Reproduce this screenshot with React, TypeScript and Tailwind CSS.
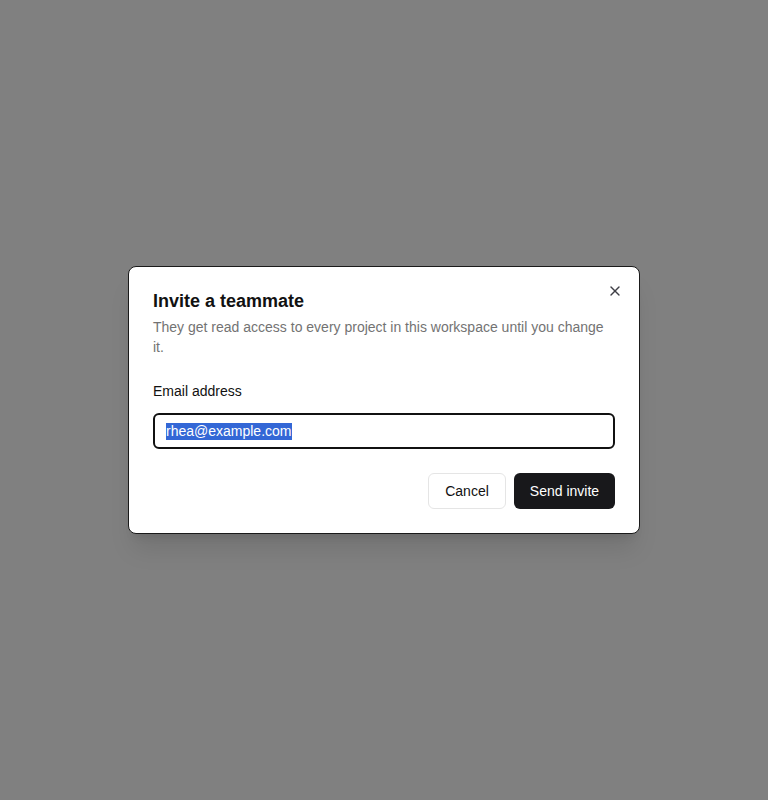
import { X } from 'lucide-react'

export default function App() {
  return (
    <div
      className="flex min-h-[800px] w-full items-center justify-center bg-[#808080]"
      style={{ fontFamily: '"Liberation Sans", Arial, sans-serif' }}
    >
      <div className="relative mb-[1px] w-[512px] rounded-lg border border-[#1a1a1a] bg-white p-6 shadow-xl">
        <button className="absolute right-4 top-4 text-[#3f3f46]">
          <X className="h-4 w-4" strokeWidth={2} />
        </button>

        <h2 className="text-[18px] font-bold leading-5 text-[#111111]">Invite a teammate</h2>
        <p className="mt-[6px] text-sm leading-5 text-[#737373]">
          They get read access to every project in this workspace until you change it.
        </p>

        <label className="mt-6 block text-sm leading-5 text-[#111111]">Email address</label>
        <div className="mt-3 flex h-9 items-center rounded-md border-2 border-[#111111] pl-[11px] pt-[2px] text-sm">
          <span className="bg-[#3367d6] leading-[17px] text-white">rhea@example.com</span>
        </div>

        <div className="mt-6 flex justify-end gap-2">
          <button className="h-9 w-[78px] rounded-md border border-[#e5e5e5] bg-white text-sm text-[#111111]">
            Cancel
          </button>
          <button className="h-9 w-[101px] rounded-md bg-[#18181b] text-sm text-white">
            Send invite
          </button>
        </div>
      </div>
    </div>
  )
}
